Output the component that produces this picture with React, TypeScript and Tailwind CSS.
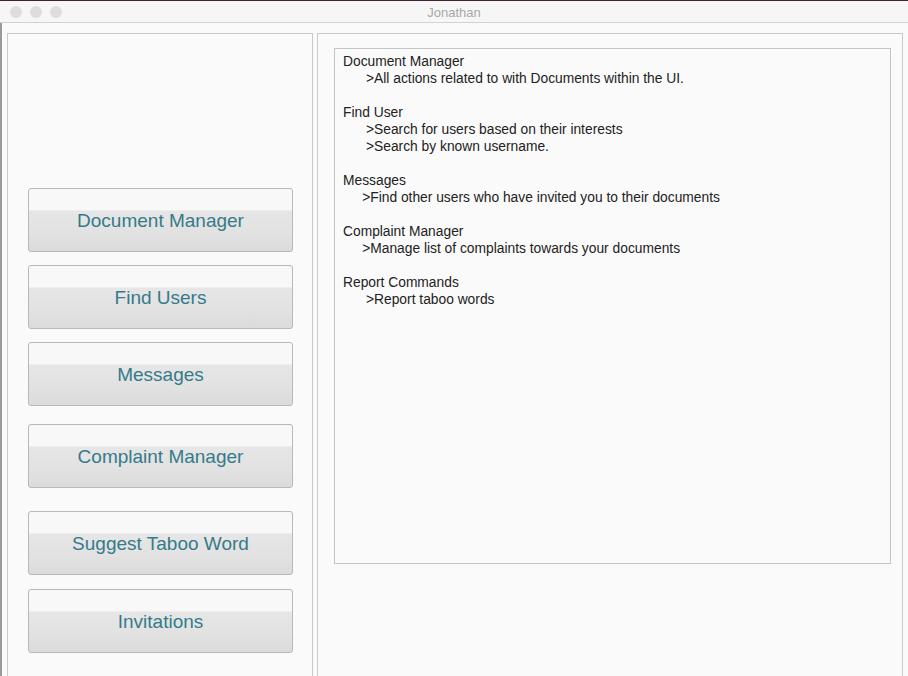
export default function App() {
  const buttons = [
    { label: "Document Manager", mt: "mt-[154px]" },
    { label: "Find Users", mt: "mt-[13px]" },
    { label: "Messages", mt: "mt-[13px]" },
    { label: "Complaint Manager", mt: "mt-[18px]" },
    { label: "Suggest Taboo Word", mt: "mt-[23px]" },
    { label: "Invitations", mt: "mt-[14px]" },
  ];

  const lines = [
    "Document Manager",
    "      >All actions related to with Documents within the UI.",
    "",
    "Find User",
    "      >Search for users based on their interests",
    "      >Search by known username.",
    "",
    "Messages",
    "     >Find other users who have invited you to their documents",
    "",
    "Complaint Manager",
    "     >Manage list of complaints towards your documents",
    "",
    "Report Commands",
    "      >Report taboo words",
  ];

  return (
    <div
      className="relative w-[908px] h-[676px] overflow-hidden bg-[#fafafa] flex flex-col"
      style={{ fontFamily: '"Liberation Sans", Arial, sans-serif' }}
    >
      {/* window top edge */}
      <div className="h-px bg-[#3d2530]" />

      {/* Title bar */}
      <div className="relative h-[22px] bg-[#f6f6f6] border-b border-[#d2d2d2] flex items-center">
        <div className="flex gap-[8px] pl-[10px]">
          <span className="w-[12px] h-[12px] rounded-full bg-[#dddddd]" />
          <span className="w-[12px] h-[12px] rounded-full bg-[#dddddd]" />
          <span className="w-[12px] h-[12px] rounded-full bg-[#dddddd]" />
        </div>
        <div className="absolute inset-0 pt-[2px] flex items-center justify-center text-[13px] text-[#a8a8a8]">
          Jonathan
        </div>
      </div>

      {/* Body */}
      <div className="flex flex-1 pt-[10px] pl-[7px] pr-[5px] border-l-2 border-[#9a9a9a]">
        {/* Left panel */}
        <div className="w-[306px] -ml-[2px] border-l border-t border-r border-[#c9c9c9] flex flex-col">
          {buttons.map((b) => (
            <div
              key={b.label}
              className={`${b.mt} ml-[20px] w-[265px] h-[64px] pt-[2px] rounded-[3px] border border-[#b8b8b8] bg-[linear-gradient(to_bottom,#f8f8f8_0%,#f8f8f8_33%,#e6e6e6_36%,#e2e2e2_70%,#dbdbdb_100%)] flex items-center justify-center text-[19px] text-[#357b8a]`}
            >
              {b.label}
            </div>
          ))}
        </div>

        {/* Splitter */}
        <div className="w-[4px]" />

        {/* Right panel */}
        <div className="flex-1 border-l border-t border-r border-[#c9c9c9] pl-[16px] pt-[14px]">
          <div className="w-[557px] h-[516px] border border-[#c4c4c4] bg-[#fafafa] pt-[4px] pl-[8px] text-[13.8px] leading-[17px] text-[#222222] whitespace-pre">
            {lines.map((l, i) => (
              <div key={i} className="h-[17px]">
                {l}
              </div>
            ))}
          </div>
        </div>
      </div>
    </div>
  );
}
